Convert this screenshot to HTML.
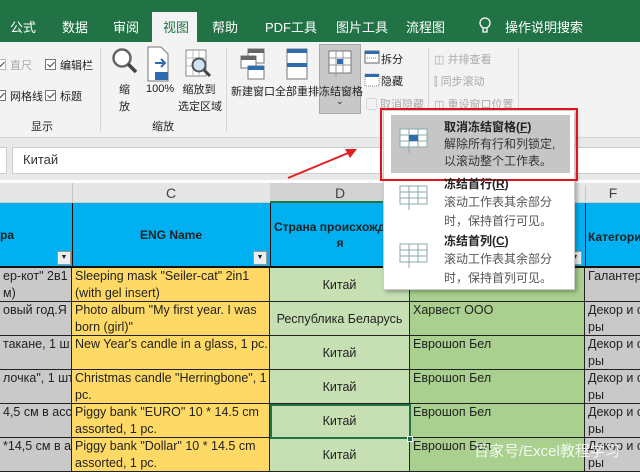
<!DOCTYPE html>
<html><head><meta charset="utf-8"><style>
*{margin:0;padding:0;box-sizing:border-box}
body{width:640px;height:467px;overflow:hidden;position:relative;background:#fff;font-family:"Liberation Sans","Noto Sans CJK SC",sans-serif;font-size:12px;color:#222}
.a{position:absolute;white-space:nowrap}
.r{font-size:11px}
.tab{position:absolute;top:17px;color:#fff;font-size:13px}
.cb{display:inline-block;width:11px;height:11px;border:1px solid #777;background:#fff;vertical-align:-1px;margin-right:4px;position:relative}
.cb:after{content:"";position:absolute;left:3px;top:0px;width:3px;height:6px;border:solid #444;border-width:0 1px 1px 0;transform:rotate(45deg)}
.sep{position:absolute;top:48px;width:1px;height:84px;background:#d6d6d6}
.cell{position:absolute;border-right:1px solid #222;border-bottom:1px solid #222;overflow:hidden;font-size:12.5px;line-height:17px;padding:0 3px;white-space:nowrap}
.gr{color:#aaa}
</style></head><body>
<div class="a" style="left:0;top:0;width:640px;height:42px;background:#217346"></div>
<div class="tab" style="left:10px">公式</div>
<div class="tab" style="left:62px">数据</div>
<div class="tab" style="left:113px">审阅</div>
<div class="a" style="left:152px;top:12px;width:45px;height:30px;background:#f3f3f3"></div>
<div class="tab" style="left:163px;color:#217346">视图</div>
<div class="tab" style="left:212px">帮助</div>
<div class="tab" style="left:265px">PDF工具</div>
<div class="tab" style="left:336px">图片工具</div>
<div class="tab" style="left:406px">流程图</div>
<svg class="a" style="left:478px;top:16px" width="14" height="20"><circle cx="7" cy="7" r="5" fill="none" stroke="#fff" stroke-width="1.3"/><path d="M5 12v4h4v-4" fill="none" stroke="#fff" stroke-width="1.3"/></svg>
<div class="tab" style="left:505px">操作说明搜索</div>
<div class="a" style="left:0;top:42px;width:640px;height:96px;background:#f3f3f3;border-bottom:1px solid #d6d6d6"></div>
<div class="a r gr" style="left:-5px;top:57px"><span class="cb" style="border-color:#bbb"></span>直尺</div>
<div class="a r" style="left:45px;top:57px"><span class="cb"></span>编辑栏</div>
<div class="a r" style="left:-5px;top:88px"><span class="cb"></span>网格线</div>
<div class="a r" style="left:45px;top:88px"><span class="cb"></span>标题</div>
<div class="a r" style="left:31px;top:118px">显示</div>
<div class="sep" style="left:100px"></div>
<svg class="a" style="left:110px;top:46px" width="30" height="34"><circle cx="12" cy="12" r="8.5" fill="#fff" stroke="#666" stroke-width="2.5"/><path d="M18 18l8 8" stroke="#444" stroke-width="3.5"/></svg>
<div class="a r" style="left:119px;top:82px;line-height:17px;white-space:normal;width:12px">缩<br>放</div>
<svg class="a" style="left:146px;top:46px" width="26" height="36"><path d="M2 1h13l7 7v27H2z" fill="#fff" stroke="#777"/><path d="M9 17h10M15 13l4 4-4 4" stroke="#2b6cb0" stroke-width="2" fill="none"/><rect x="9" y="26" width="13" height="8" fill="#2e6bb0"/></svg>
<div class="a r" style="left:146px;top:83px">100%</div>
<svg class="a" style="left:184px;top:48px" width="30" height="34"><rect x="2" y="2" width="20" height="26" fill="#fff" stroke="#888"/><path d="M2 10h20M2 18h20M9 2v26M15 2v26" stroke="#bbb"/><circle cx="15" cy="17" r="6.5" fill="#cfe3f5" stroke="#555" stroke-width="2"/><path d="M20 22l6 6" stroke="#444" stroke-width="3"/></svg>
<div class="a r" style="left:178px;top:82px;line-height:17px;text-align:center;width:42px">缩放到<br>选定区域</div>
<div class="a r" style="left:152px;top:118px">缩放</div>
<div class="sep" style="left:226px"></div>
<svg class="a" style="left:240px;top:48px" width="26" height="32"><rect x="8" y="1" width="16" height="14" fill="#fff" stroke="#777"/><rect x="8" y="1" width="16" height="4" fill="#666"/><rect x="1" y="8" width="15" height="12" fill="#fff" stroke="#777"/><rect x="1" y="8" width="15" height="4" fill="#666"/><rect x="8" y="18" width="16" height="13" fill="#fff" stroke="#777"/><rect x="8" y="18" width="16" height="4" fill="#2e6bb0"/></svg>
<div class="a r" style="left:231px;top:83px">新建窗口</div>
<svg class="a" style="left:286px;top:48px" width="22" height="32"><rect x="1" y="1" width="20" height="30" fill="#fff" stroke="#777"/><rect x="1" y="1" width="20" height="4" fill="#2e6bb0"/><rect x="1" y="15" width="20" height="4" fill="#2e6bb0"/></svg>
<div class="a r" style="left:275px;top:83px">全部重排</div>
<div class="a" style="left:319px;top:44px;width:42px;height:70px;background:#c8c8c8;border:1px solid #aaa"></div>
<svg class="a" style="left:328px;top:50px" width="24" height="28"><rect x="1" y="1" width="22" height="22" fill="#fff" stroke="#777"/><path d="M1 8h22M1 15h22M8 1v26M15 1v22" stroke="#999"/><rect x="9" y="9" width="6" height="5" fill="#2e6bb0"/></svg>
<div class="a r" style="left:319px;top:83px">冻结窗格</div>
<div class="a" style="left:336px;top:96px;font-size:9px">⌄</div>
<svg class="a" style="left:364px;top:50px" width="16" height="14"><rect x="1" y="1" width="14" height="12" fill="#fff" stroke="#666"/><rect x="1" y="1" width="14" height="3" fill="#2e6bb0"/><path d="M3 8h10" stroke="#777" stroke-dasharray="1 1"/></svg>
<div class="a r" style="left:381px;top:51px">拆分</div>
<svg class="a" style="left:364px;top:73px" width="16" height="14"><rect x="1" y="1" width="14" height="12" fill="#fff" stroke="#888" stroke-dasharray="1 1"/><rect x="1" y="1" width="14" height="3" fill="#2e6bb0"/></svg>
<div class="a r" style="left:381px;top:73px">隐藏</div>
<div class="a r gr" style="left:366px;top:96px">▢ 取消隐藏</div>
<div class="sep" style="left:428px"></div>
<div class="a r gr" style="left:434px;top:51px">◫ 并排查看</div>
<div class="a r gr" style="left:434px;top:73px">⫿ 同步滚动</div>
<div class="a r gr" style="left:434px;top:96px">◫ 重设窗口位置</div>
<div class="sep" style="left:518px"></div>
<div class="a" style="left:0;top:138px;width:640px;height:42px;background:#e9e9e9"></div>
<div class="a" style="left:-2px;top:147px;width:9px;height:27px;background:#fff;border:1px solid #ccc"></div>
<div class="a" style="left:12px;top:147px;width:640px;height:27px;background:#fff;border:1px solid #ccc"></div>
<div class="a" style="left:23px;top:152px;font-size:13px;color:#333">Китай</div>
<svg class="a" style="left:285px;top:143px" width="80" height="40"><path d="M3 35L68 8" stroke="#e02020" stroke-width="2"/><path d="M72 6l-12 0l5 9z" fill="#e02020"/></svg>
<div class="a" style="left:0;top:183px;width:640px;height:20px;background:#e6e6e6;border-bottom:1px solid #ccc"></div>
<div class="a" style="left:72px;top:183px;width:1px;height:20px;background:#c6c6c6"></div>
<div class="a" style="left:72px;top:185px;width:198px;text-align:center;font-size:14px;color:#444">C</div>
<div class="a" style="left:270px;top:183px;width:140px;height:20px;background:#d2d2d2;border-bottom:2px solid #217346"></div>
<div class="a" style="left:270px;top:185px;width:140px;text-align:center;font-size:14px;color:#444">D</div>
<div class="a" style="left:585px;top:185px;width:55px;text-align:center;font-size:14px;color:#444;border-left:1px solid #c6c6c6">F</div>
<div class="a" style="left:0;top:203px;width:640px;height:65px;background:#00b0f0;border-bottom:2px solid #111"></div>
<div class="a" style="left:72px;top:203px;width:1px;height:65px;background:#111"></div>
<div class="a" style="left:270px;top:203px;width:1px;height:65px;background:#111"></div>
<div class="a" style="left:585px;top:203px;width:1px;height:65px;background:#111"></div>
<div class="a" style="left:0;top:228px;font-weight:bold;font-size:12px">ра</div>
<div class="a" style="left:72px;top:228px;width:198px;text-align:center;font-weight:bold;font-size:12px">ENG Name</div>
<div class="a" style="left:274px;top:220px;font-weight:bold;font-size:12px">Страна происхожде</div>
<div class="a" style="left:270px;top:236px;width:140px;text-align:center;font-weight:bold;font-size:12px">я</div>
<div class="a" style="left:588px;top:230px;font-weight:bold;font-size:12px">Категори</div>
<div class="a" style="left:57px;top:251px;width:14px;height:14px;background:#eee;border:1px solid #999;font-size:7px;text-align:center;line-height:12px">▼</div>
<div class="a" style="left:253px;top:251px;width:14px;height:14px;background:#eee;border:1px solid #999;font-size:7px;text-align:center;line-height:12px">▼</div>
<div class="a" style="left:568px;top:251px;width:14px;height:14px;background:#eee;border:1px solid #999;font-size:7px;text-align:center;line-height:12px">▼</div>
<div id="rows"></div>
<script>
var d=[["ер-кот\" 2в1\nм)","Sleeping mask \"Seiler-cat\" 2in1\n(with gel insert)","Китай","","Галантер"],
["овый год.Я р","Photo album \"My first year. I was\nborn (girl)\"","Республика Беларусь","Харвест ООО","Декор и с\nры"],
["такане, 1 ш","New Year's candle in a glass, 1 pc.","Китай","Еврошоп Бел","Декор и с\nры"],
["лочка\", 1 шт.","Christmas candle \"Herringbone\", 1\npc.","Китай","Еврошоп Бел","Декор и с\nры"],
["4,5 см в асс","Piggy bank \"EURO\" 10 * 14.5 cm\nassorted, 1 pc.","Китай","Еврошоп Бел","Декор и с\nры"],
["*14,5 см в ас","Piggy bank \"Dollar\" 10 * 14.5 cm\nassorted, 1 pc.","Китай","Еврошоп Бел","Декор и с\nры"]];
var xs=[0,72,270,410,585,645],bg=["#c9c9c9","#ffd966","#c6e0b4","#a9d08e","#c9c9c9"],h="";
d.forEach(function(r,i){var y=268+i*34;r.forEach(function(t,j){var w=xs[j+1]-xs[j];
var st=j==2?"text-align:center;line-height:34px;":"padding-top:0;";
h+='<div class="cell" style="left:'+xs[j]+'px;top:'+y+'px;width:'+w+'px;height:34px;background:'+bg[j]+';'+st+'">'+t.replace(/\n/g,"<br>")+'</div>';});});
document.getElementById("rows").innerHTML=h;
</script>
<div class="a" style="left:270px;top:404px;width:141px;height:35px;border:2px solid #217346"></div>
<div class="a" style="left:407px;top:436px;width:6px;height:6px;background:#217346;border:1px solid #fff"></div>
<div class="a" style="left:383px;top:110px;width:192px;height:180px;background:#fff;box-shadow:2px 2px 4px rgba(0,0,0,.3);border:1px solid #ccc"></div>
<div class="a" style="left:391px;top:115px;width:179px;height:58px;background:#c6c6c6"></div>
<div class="a" style="left:380px;top:108px;width:198px;height:73px;border:2px solid #e0141e"></div>
<svg class="a" style="left:399px;top:128px" width="30" height="26"><rect x="1" y="1" width="27" height="18" fill="#fff" stroke="#8aa"/><path d="M1 7h27M1 13h27M10 1v24M19 1v18" stroke="#8aa"/><rect x="10" y="7" width="9" height="6" fill="#2e6bb0"/></svg>
<svg class="a" style="left:399px;top:185px" width="30" height="26"><rect x="1" y="1" width="27" height="18" fill="#fff" stroke="#8aa"/><path d="M1 7h27M1 13h27M10 1v24M19 1v18" stroke="#8aa"/></svg>
<svg class="a" style="left:399px;top:243px" width="30" height="26"><rect x="1" y="1" width="27" height="18" fill="#fff" stroke="#8aa"/><path d="M1 7h27M1 13h27M10 1v24M19 1v18" stroke="#8aa"/></svg>
<div class="a" style="left:444px;top:118px;font-weight:bold;line-height:18px">取消冻结窗格(<u>F</u>)</div>
<div class="a" style="left:444px;top:136px;line-height:17px;color:#333">解除所有行和列锁定,<br>以滚动整个工作表。</div>
<div class="a" style="left:444px;top:175px;font-weight:bold;line-height:18px">冻结首行(<u>R</u>)</div>
<div class="a" style="left:444px;top:193px;line-height:19px;color:#555">滚动工作表其余部分<br>时，保持首行可见。</div>
<div class="a" style="left:444px;top:232px;font-weight:bold;line-height:18px">冻结首列(<u>C</u>)</div>
<div class="a" style="left:444px;top:250px;line-height:19px;color:#555">滚动工作表其余部分<br>时，保持首列可见。</div>
<div class="a" style="left:474px;top:440px;font-size:15px;color:rgba(255,255,255,.85)">百家号/Excel教程学习</div>
</body></html>
